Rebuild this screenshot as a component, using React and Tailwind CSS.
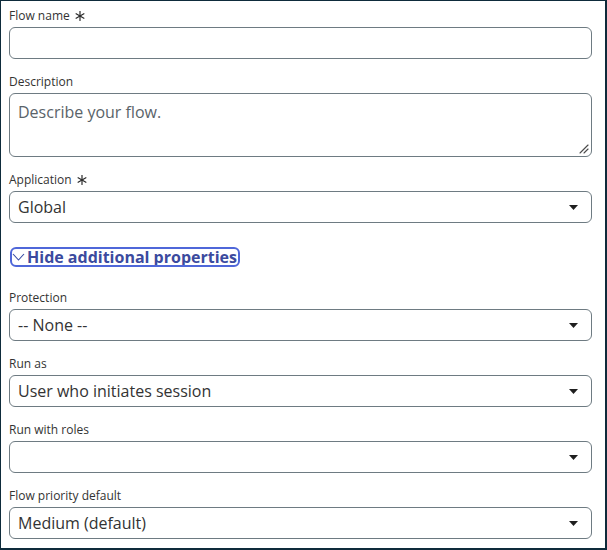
import React from "react";

const font = { fontFamily: '"Segoe UI", "Open Sans", "Liberation Sans", sans-serif' };

function Star() {
  return (
    <svg width="10" height="10" viewBox="0 0 10 10" className="inline-block ml-[5px] shrink-0">
      <g stroke="#2b2b2b" strokeWidth="1.2" strokeLinecap="round">
        <line x1="5" y1="0.5" x2="5" y2="9.5" />
        <line x1="1.1" y1="2.75" x2="8.9" y2="7.25" />
        <line x1="1.1" y1="7.25" x2="8.9" y2="2.75" />
      </g>
    </svg>
  );
}

function Label({ children, req }) {
  return (
    <div className="h-5 text-[12px] leading-[18px] text-[#333333] flex items-start">
      <div className="h-[18px] flex items-center">
        <span>{children}</span>
        {req && <Star />}
      </div>
    </div>
  );
}

function Caret() {
  return (
    <svg width="9" height="5" viewBox="0 0 9 5" className="shrink-0">
      <path d="M0 0 H9 L4.5 5 Z" fill="#1f1f1f" />
    </svg>
  );
}

function Select({ value }) {
  return (
    <div className="h-8 rounded-[6px] border border-[#6e7b82] bg-white flex items-center pl-2 pr-[13px]">
      <span className="flex-1 text-[16px] text-[#333333] leading-5">{value}</span>
      <Caret />
    </div>
  );
}

export default function App() {
  return (
    <div
      className="w-[607px] h-[550px] bg-white border-t border-l border-r-2 border-b-2 border-[#0e2b3b] pt-[6px] pl-2 pr-[13px] box-border"
      style={font}
    >
      <Label req>Flow name</Label>
      <div className="h-8 rounded-[6px] border border-[#6e7b82] bg-white" />

      <div className="mt-[14px]">
        <Label>Description</Label>
        <div className="relative h-16 rounded-[6px] border border-[#6e7b82] bg-white pl-2 pt-[6px]">
          <span className="text-[16px] text-[#5a6369]">Describe your flow.</span>
          <svg width="10" height="10" viewBox="0 0 10 10" className="absolute right-[2px] bottom-[2px]">
            <g stroke="#4a4a4a" strokeWidth="1.1" strokeLinecap="round">
              <line x1="1" y1="9" x2="9" y2="1" />
              <line x1="5" y1="9" x2="9" y2="5" />
            </g>
          </svg>
        </div>
      </div>

      <div className="mt-[14px]">
        <Label req>Application</Label>
        <Select value="Global" />
      </div>

      <div className="mt-[26px] flex">
        <div className="h-4 flex items-center gap-[2px] pr-[1px] rounded-[4px] outline-2 outline-[#4f67d9] ml-[3px]">
          <svg width="13" height="8" viewBox="0 0 13 8" className="shrink-0">
            <path d="M1 1 L6.5 7 L12 1" fill="none" stroke="#3b4fa6" strokeWidth="1.1" />
          </svg>
          <span className="text-[16px] font-bold text-[#3b4a9e] leading-4">Hide additional properties</span>
        </div>
      </div>

      <div className="mt-[24px]">
        <Label>Protection</Label>
        <Select value="-- None --" />
      </div>

      <div className="mt-[14px]">
        <Label>Run as</Label>
        <Select value="User who initiates session" />
      </div>

      <div className="mt-[14px]">
        <Label>Run with roles</Label>
        <Select value="" />
      </div>

      <div className="mt-[14px]">
        <Label>Flow priority default</Label>
        <Select value="Medium (default)" />
      </div>
    </div>
  );
}
